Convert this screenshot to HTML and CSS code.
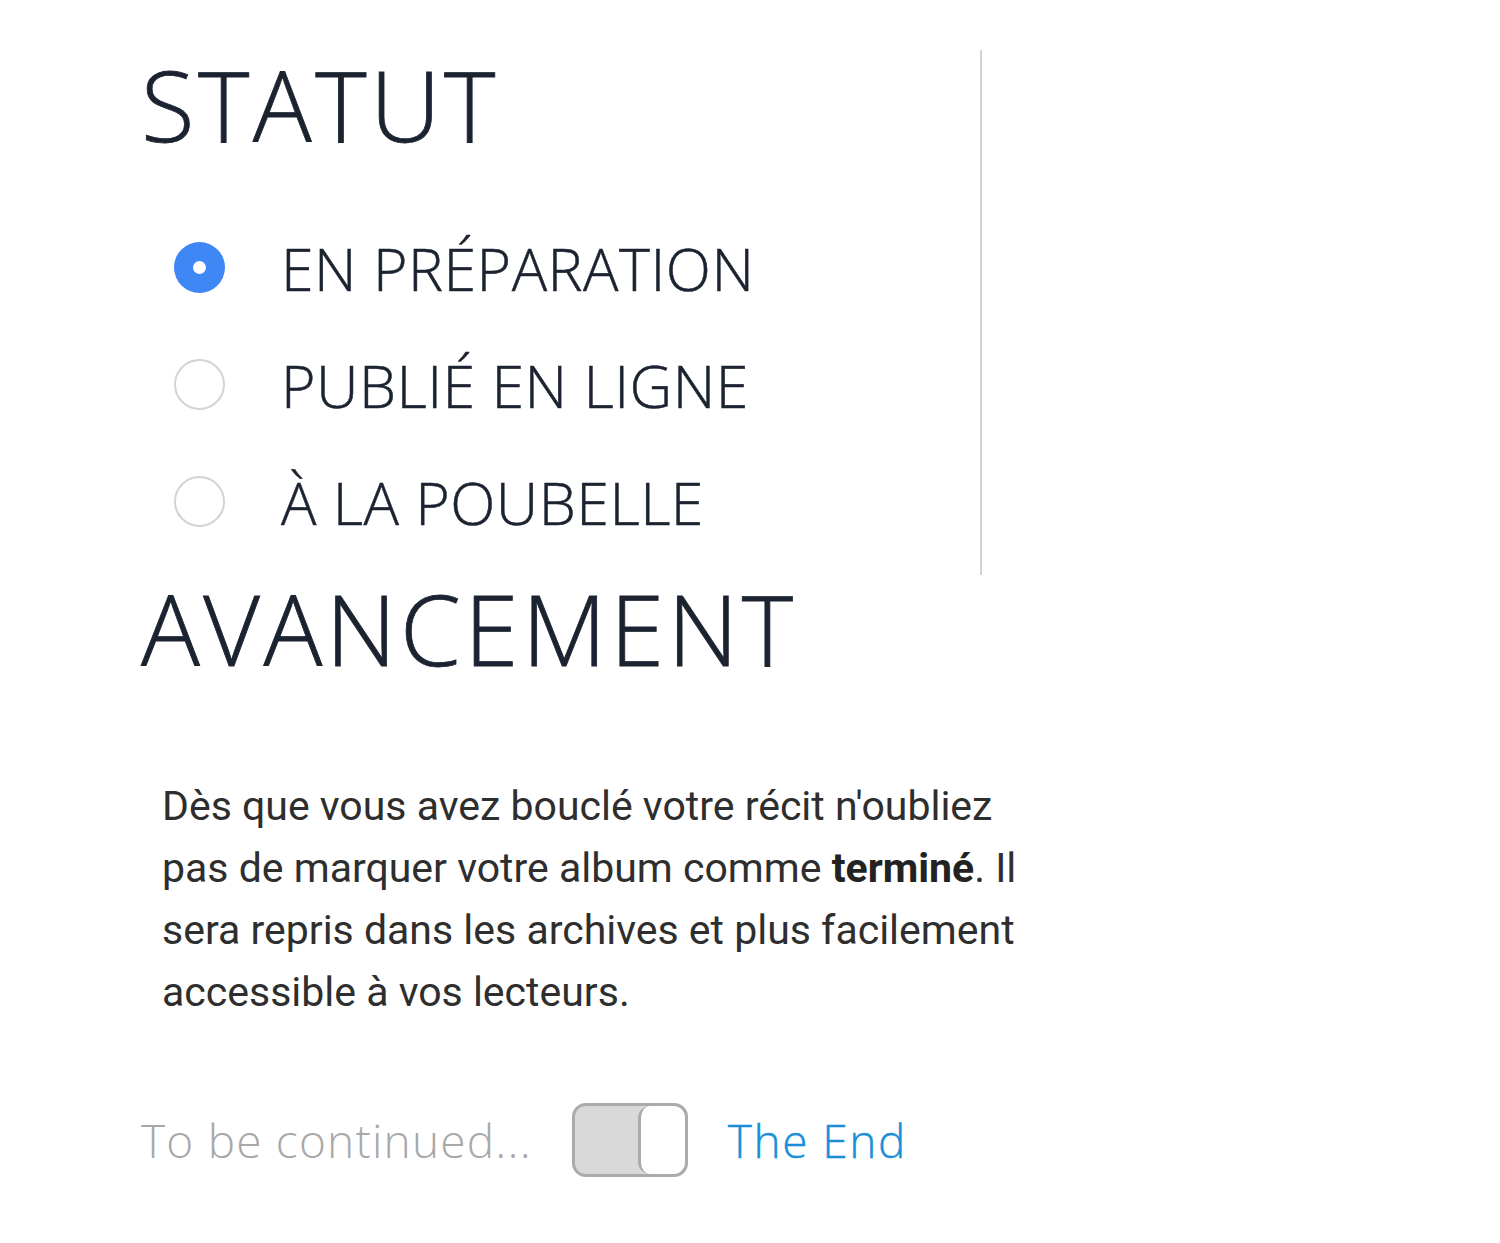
FILE: index.html
```html
<!DOCTYPE html>
<html lang="fr">
<head>
<meta charset="utf-8">
<title>Statut</title>
<link rel="stylesheet" href="styles.css">
</head>
<body>
<div class="page">
  <section class="statut">
    <h1 class="title">STATUT</h1>
    <div class="options">
      <label class="option"><span class="radio checked"></span><span class="opt-label">EN PRÉPARATION</span></label>
      <label class="option"><span class="radio"></span><span class="opt-label">PUBLIÉ EN LIGNE</span></label>
      <label class="option"><span class="radio"></span><span class="opt-label">À LA POUBELLE</span></label>
    </div>
  </section>
  <section class="avancement">
    <h1 class="title">AVANCEMENT</h1>
    <p class="info">Dès que vous avez bouclé votre récit n'oubliez pas de marquer votre album comme <strong>terminé</strong>. Il sera repris dans les archives et plus facilement accessible à vos lecteurs.</p>
    <div class="toggle-row">
      <span class="tg-off">To be continued...</span>
      <span class="switch"><span class="knob"></span></span>
      <span class="tg-on">The End</span>
    </div>
  </section>
</div>
</body>
</html>
```
FILE: styles.css
```css
html, body {
  margin: 0;
  padding: 0;
  background: #ffffff;
}
.page {
  padding: 50px 0 0 141px;
  font-family: "Open Sans", sans-serif;
  color: #1c2330;
}
.statut {
  width: 841px;
  height: 525px;
  border-right: 2px solid #d2d2d2;
  box-sizing: border-box;
  padding-top: 4px;
}
.title {
  margin: 0;
  font-size: 98px;
  line-height: 100px;
  font-weight: 300;
  letter-spacing: 3.5px;
  color: #1c2330;
  -webkit-text-stroke: 0.8px #1c2330;
}
.options {
  display: flex;
  flex-direction: column;
  margin-top: 55px;
  padding-left: 33px;
}
.option {
  display: flex;
  align-items: center;
  height: 117px;
}
.radio {
  width: 51px;
  height: 51px;
  border-radius: 50%;
  border: 2px solid #d4d4d4;
  box-sizing: border-box;
  background: #fff;
  flex: none;
  display: flex;
  align-items: center;
  justify-content: center;
}
.radio.checked {
  border: none;
  background: #3e87f5;
}
.radio.checked::after {
  content: "";
  width: 13px;
  height: 13px;
  border-radius: 50%;
  background: #fff;
}
.opt-label {
  margin-left: 56px;
  font-size: 59px;
  font-weight: 300;
  letter-spacing: 0.5px;
  color: #1c2330;
  -webkit-text-stroke: 0.5px #1c2330;
}
.avancement {
  padding-top: 3px;
}
.info {
  margin: 97px 0 0 21px;
  width: 880px;
  font-family: Roboto, sans-serif;
  font-size: 41px;
  line-height: 62px;
  color: #2e2e2e;
}
.info strong {
  font-weight: 700;
  color: #222;
}
.toggle-row {
  display: flex;
  align-items: center;
  margin-top: 80px;
}
.tg-off {
  font-size: 46px;
  font-weight: 300;
  color: #a8a8a8;
  letter-spacing: 1.2px;
}
.switch {
  margin-left: 40px;
  width: 116px;
  height: 74px;
  box-sizing: border-box;
  border: 3px solid #ababab;
  border-radius: 14px;
  background: #d9d9d9;
  display: flex;
  justify-content: flex-end;
  overflow: hidden;
}
.knob {
  width: 47px;
  height: 100%;
  background: #fff;
  border-left: 3px solid #ababab;
  border-radius: 12px;
  box-sizing: border-box;
}
.tg-on {
  margin-left: 40px;
  font-size: 46px;
  font-weight: 300;
  color: #1a8fd8;
  letter-spacing: 1.5px;
  -webkit-text-stroke: 0.4px #1a8fd8;
}
```
